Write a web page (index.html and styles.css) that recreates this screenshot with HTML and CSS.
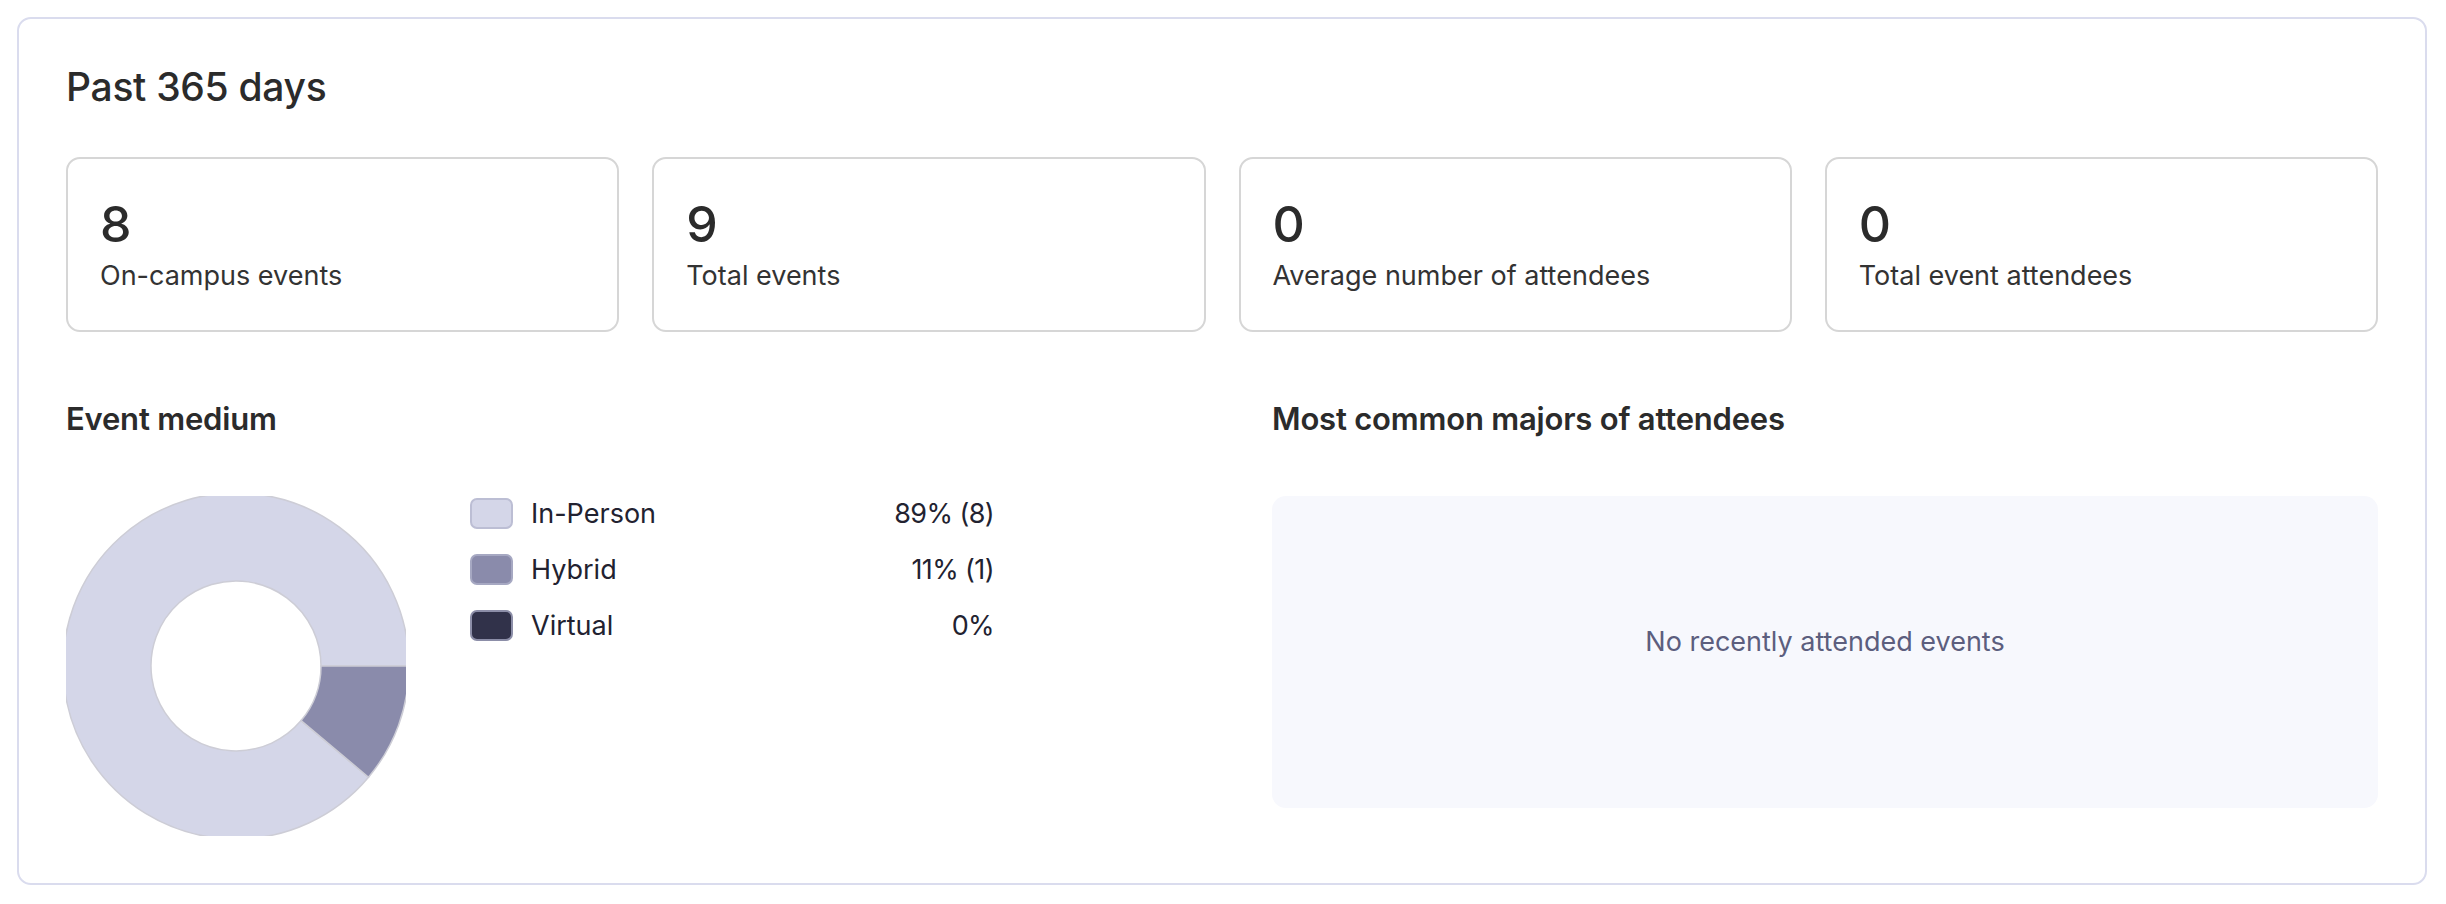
FILE: index.html
```html
<!DOCTYPE html>
<html lang="en">
<head>
    <meta charset="UTF-8">
    <meta name="viewport" content="width=device-width, initial-scale=1.0">
    <title>Event Insights</title>
    <link rel="stylesheet" href="styles.css">
</head>
<body>

    <div class="insights">
        <h2 class="insights-title">Past 365 days</h2>

        <!-- Summary numbers -->
        <div class="stats">
            <div class="stat-card">
                <div class="stat-value">8</div>
                <div class="stat-label">On-campus events</div>
            </div>
            <div class="stat-card">
                <div class="stat-value">9</div>
                <div class="stat-label">Total events</div>
            </div>
            <div class="stat-card">
                <div class="stat-value">0</div>
                <div class="stat-label">Average number of attendees</div>
            </div>
            <div class="stat-card">
                <div class="stat-value">0</div>
                <div class="stat-label">Total event attendees</div>
            </div>
        </div>

        <div class="charts">
            <!-- Event medium donut -->
            <div class="chart-block">
                <h3 class="chart-title">Event medium</h3>
                <div class="medium-chart">
                    <svg class="donut" width="340" height="340" viewBox="0 0 340 340">
                        <path class="slice-in-person" d="M302.5 281.2 A173 173 0 1 1 343 170 L255 170 A85 85 0 1 0 235.1 224.6 Z"/>
                        <path class="slice-hybrid" d="M343 170 A173 173 0 0 1 302.5 281.2 L235.1 224.6 A85 85 0 0 0 255 170 Z"/>
                    </svg>
                    <ul class="legend">
                        <li class="legend-row">
                            <span class="swatch swatch-in-person"></span>
                            <span class="legend-name">In-Person</span>
                            <span class="legend-value">89% (8)</span>
                        </li>
                        <li class="legend-row">
                            <span class="swatch swatch-hybrid"></span>
                            <span class="legend-name">Hybrid</span>
                            <span class="legend-value">11% (1)</span>
                        </li>
                        <li class="legend-row">
                            <span class="swatch swatch-virtual"></span>
                            <span class="legend-name">Virtual</span>
                            <span class="legend-value">0%</span>
                        </li>
                    </ul>
                </div>
            </div>

            <!-- Majors -->
            <div class="chart-block">
                <h3 class="chart-title">Most common majors of attendees</h3>
                <div class="empty-state">No recently attended events</div>
            </div>
        </div>
    </div>

</body>
</html>
```

FILE: styles.css
```css
body {
    font-family: Inter, "Noto Sans", Arial, sans-serif;
    background-color: #ffffff;
    color: #2e2e2e;
    margin: 0;
    padding: 17px 19px 17px 17px;
}
.insights {
    border: 2px solid #dadcee;
    border-radius: 14px;
    padding: 46px 47px 47px 47px;
}
.insights-title {
    margin: 0;
    font-size: 39px;
    font-weight: 500;
    line-height: 44px;
    letter-spacing: -0.3px;
    color: #2b2b2b;
}
.stats {
    display: grid;
    grid-template-columns: repeat(4, 1fr);
    gap: 33px;
    margin-top: 48px;
}
.stat-card {
    border: 2px solid #d6d6d6;
    border-radius: 14px;
    padding: 37px 32px 37px 32px;
}
.stat-value {
    font-size: 50px;
    font-weight: 500;
    line-height: 56px;
    color: #2b2b2b;
}
.stat-label {
    font-size: 27px;
    line-height: 34px;
    margin-top: 7px;
    color: #333333;
}
.charts {
    display: grid;
    grid-template-columns: 1fr 1fr;
    gap: 100px;
    margin-top: 69px;
}
.chart-title {
    margin: 0;
    font-size: 31px;
    font-weight: 600;
    line-height: 36px;
    color: #2b2b2b;
    letter-spacing: -0.2px;
}
.medium-chart {
    display: flex;
    align-items: flex-start;
    gap: 64px;
    margin-top: 59px;
}
.donut {
    display: block;
    flex-shrink: 0;
}
.slice-in-person {
    fill: #d4d6e8;
    stroke: #cdcdd6;
    stroke-width: 1.5;
}
.slice-hybrid {
    fill: #8a8bab;
    stroke: #cdcdd6;
    stroke-width: 1.5;
}
.legend {
    list-style: none;
    margin: 0;
    padding: 0;
    width: 524px;
}
.legend-row {
    display: flex;
    align-items: center;
    height: 56px;
    font-size: 27px;
    color: #222230;
}
.legend-row:first-child {
    margin-top: -11px;
}
.swatch {
    width: 39px;
    height: 27px;
    border-radius: 7px;
    border: 2px solid;
    margin-right: 18px;
}
.swatch-in-person {
    background-color: #d4d6e8;
    border-color: #bcbed4;
}
.swatch-hybrid {
    background-color: #8a8bab;
    border-color: #a6a8c2;
}
.swatch-virtual {
    background-color: #31324a;
    border-color: #8c8ea8;
}
.legend-name {
    flex-grow: 1;
}
.legend-value {
    text-align: right;
    letter-spacing: -0.6px;
}
.empty-state {
    display: flex;
    align-items: center;
    justify-content: center;
    height: 312px;
    box-sizing: border-box;
    padding-bottom: 22px;
    margin-top: 59px;
    background-color: #f7f8fd;
    border-radius: 14px;
    font-size: 27px;
    color: #5c5e7e;
}
```
